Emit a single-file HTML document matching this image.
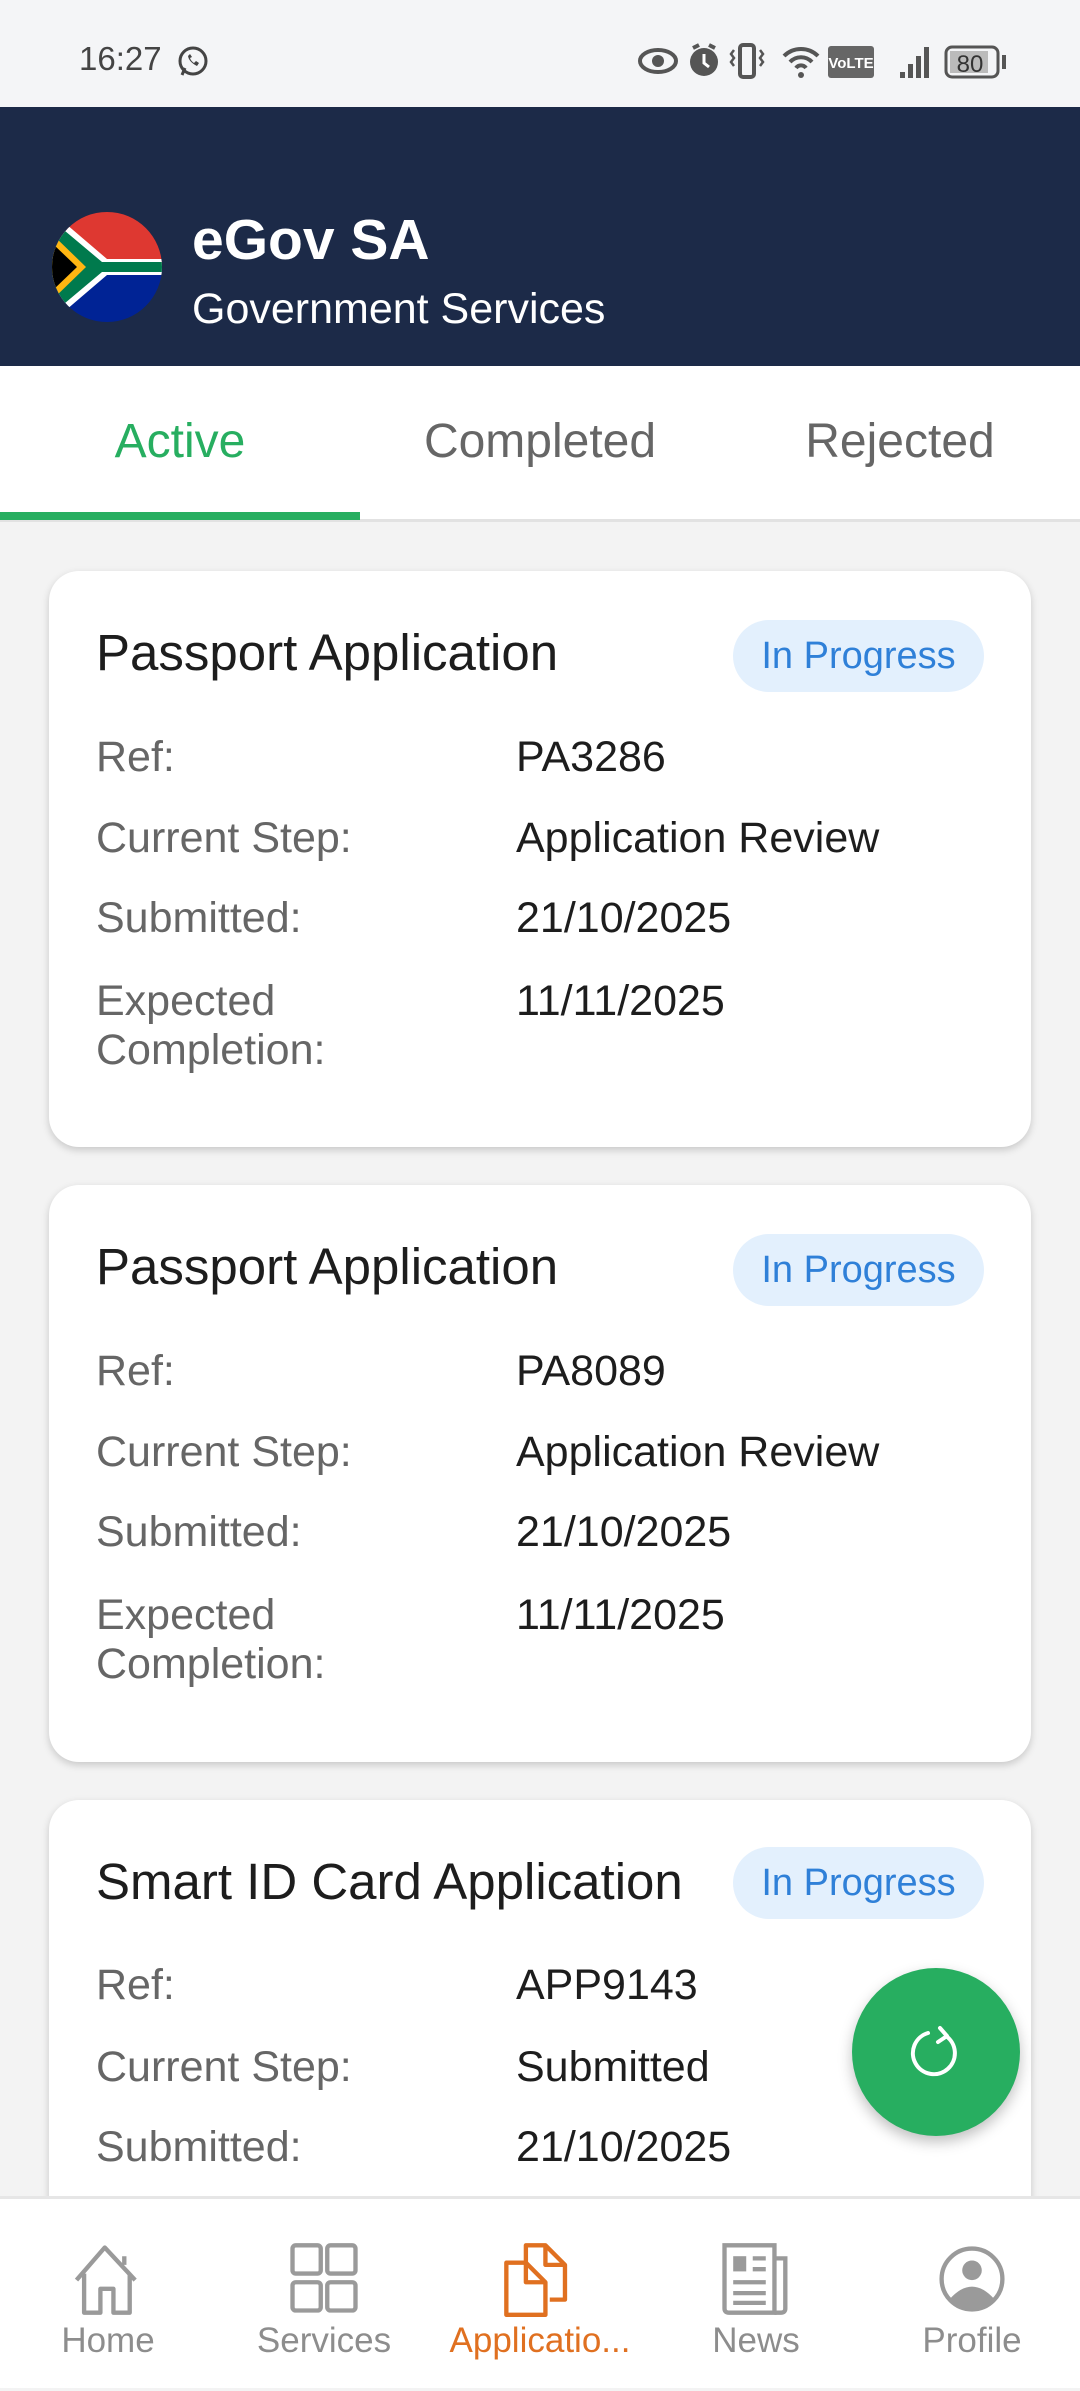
<!DOCTYPE html>
<html><head><meta charset="utf-8"><style>
*{margin:0;padding:0;box-sizing:border-box}
body{width:1080px;height:2388px;position:relative;overflow:hidden;background:#f3f3f3;font-family:"Liberation Sans",sans-serif}
.abs{position:absolute}
#status{left:0;top:0;width:1080px;height:107px;background:#f4f5f7}
#hdr{left:0;top:107px;width:1080px;height:259px;background:#1c2a48}
#tabs{left:0;top:366px;width:1080px;height:156px;background:#fff;border-bottom:3px solid #e2e2e2}
.tab{top:0;height:156px;line-height:152px;font-size:48px;text-align:center;color:#666;width:360px}
.card{left:49px;width:982px;background:#fff;border-radius:30px;box-shadow:0 3px 8px rgba(0,0,0,.18)}
.title{left:47px;font-size:51px;color:#1d1d1d;line-height:60px}
.badge{left:684px;width:251px;height:72px;border-radius:36px;background:#e3f0fd;color:#2f80d8;font-size:38px;line-height:72px;text-align:center}
.lbl{left:47px;font-size:43px;color:#666;line-height:49px}
.val{left:467px;font-size:43px;color:#1d1d1d;line-height:49px}
#nav{left:0;top:2196px;width:1080px;height:192px;background:#fff;border-top:3px solid #e6e6e6;z-index:5}
.ni{top:0;width:216px;height:192px;text-align:center}
.ni svg{position:absolute;left:70px;top:42px}
.ni span{position:absolute;left:0;width:216px;top:122px;font-size:35px;color:#8d8d8d}
</style></head><body>
<div id="status" class="abs">
  <div class="abs" style="left:79px;top:40px;font-size:33px;color:#444">16:27</div>
  <svg class="abs" style="left:176px;top:44px" width="34" height="34" viewBox="0 0 34 34"><circle cx="17" cy="17" r="13" fill="none" stroke="#444" stroke-width="3"/><path d="M6 31 L9 24" stroke="#444" stroke-width="3"/><path d="M12 12 q1 6 9 10 l2-3-3-2-2 2q-3-2-4-5l2-1-2-3z" fill="#444"/></svg>
  <svg class="abs" style="left:636px;top:42px" width="380" height="38" viewBox="0 0 380 38">
    <ellipse cx="22" cy="19" rx="18" ry="11" fill="none" stroke="#555" stroke-width="4"/><circle cx="22" cy="19" r="6" fill="#555"/>
    <circle cx="68" cy="20" r="14" fill="#555"/><path d="M57 6l6-3M79 6l-6-3" stroke="#555" stroke-width="4"/><path d="M68 12v9l5 4" stroke="#fff" stroke-width="3" fill="none"/>
    <rect x="104" y="3" width="14" height="32" rx="3" fill="none" stroke="#555" stroke-width="4"/><path d="M98 8l-3 4 3 4-3 4 3 4M124 8l3 4-3 4 3 4-3 4" stroke="#555" stroke-width="2.5" fill="none"/>
    <path d="M148 14a24 24 0 0 1 34 0M154 20a15 15 0 0 1 22 0M160 26a6 6 0 0 1 10 0" stroke="#555" stroke-width="4" fill="none"/><circle cx="165" cy="33" r="3" fill="#555"/>
    <rect x="192" y="4" width="46" height="32" rx="3" fill="#666"/><text x="215" y="26" font-size="15" font-weight="bold" fill="#fff" text-anchor="middle">VoLTE</text>
    <rect x="264" y="30" width="5" height="6" fill="#555"/><rect x="272" y="22" width="5" height="14" fill="#555"/><rect x="280" y="14" width="5" height="22" fill="#555"/><rect x="288" y="5" width="5" height="31" fill="#555"/>
    <rect x="310" y="5" width="52" height="30" rx="6" fill="none" stroke="#555" stroke-width="3"/><rect x="314" y="9" width="38" height="22" fill="#bbb"/><rect x="366" y="13" width="4" height="14" fill="#555"/><text x="334" y="30" font-size="24" fill="#333" text-anchor="middle">80</text>
  </svg>
</div>
<div id="hdr" class="abs">
  <svg class="abs" style="left:52px;top:105px" width="110" height="110" viewBox="0 0 110 110">
    <defs><clipPath id="c"><circle cx="55" cy="55" r="55"/></clipPath></defs>
    <g clip-path="url(#c)">
      <rect width="110" height="55" fill="#de3831"/><rect y="55" width="110" height="55" fill="#002395"/>
      <path d="M0 0 L55 47 H110 V63 H55 L0 110Z" fill="#fff"/>
      <path d="M0 8 L50 50 H110 V60 H50 L0 102Z" fill="#007a4d"/>
      <path d="M0 22 L34 55 L0 88Z" fill="#ffb612"/>
      <path d="M0 31 L25 55 L0 79Z" fill="#000"/>
    </g>
  </svg>
  <div class="abs" style="left:192px;top:100px;font-size:57px;font-weight:bold;color:#fff">eGov SA</div>
  <div class="abs" style="left:192px;top:178px;font-size:43px;color:#fff">Government Services</div>
</div>
<div id="tabs" class="abs">
  <div class="abs tab" style="left:0;color:#27ae60;font-weight:500">Active</div>
  <div class="abs tab" style="left:360px">Completed</div>
  <div class="abs tab" style="left:720px">Rejected</div>
  <div class="abs" style="left:0;top:146px;width:360px;height:8px;background:#27ae60"></div>
</div>

<div class="abs card" style="top:571px;height:576px">
  <div class="abs title" style="top:52px">Passport Application</div>
  <div class="abs badge" style="top:49px">In Progress</div>
  <div class="abs lbl" style="top:162px">Ref:</div><div class="abs val" style="top:162px">PA3286</div>
  <div class="abs lbl" style="top:243px">Current Step:</div><div class="abs val" style="top:243px">Application Review</div>
  <div class="abs lbl" style="top:323px">Submitted:</div><div class="abs val" style="top:323px">21/10/2025</div>
  <div class="abs lbl" style="top:406px">Expected<br>Completion:</div><div class="abs val" style="top:406px">11/11/2025</div>
</div>
<div class="abs card" style="top:1185px;height:577px">
  <div class="abs title" style="top:52px">Passport Application</div>
  <div class="abs badge" style="top:49px">In Progress</div>
  <div class="abs lbl" style="top:162px">Ref:</div><div class="abs val" style="top:162px">PA8089</div>
  <div class="abs lbl" style="top:243px">Current Step:</div><div class="abs val" style="top:243px">Application Review</div>
  <div class="abs lbl" style="top:323px">Submitted:</div><div class="abs val" style="top:323px">21/10/2025</div>
  <div class="abs lbl" style="top:406px">Expected<br>Completion:</div><div class="abs val" style="top:406px">11/11/2025</div>
</div>
<div class="abs card" style="top:1800px;height:420px;border-radius:30px 30px 0 0">
  <div class="abs title" style="top:52px">Smart ID Card Application</div>
  <div class="abs badge" style="top:47px">In Progress</div>
  <div class="abs lbl" style="top:161px">Ref:</div><div class="abs val" style="top:161px">APP9143</div>
  <div class="abs lbl" style="top:243px">Current Step:</div><div class="abs val" style="top:243px">Submitted</div>
  <div class="abs lbl" style="top:323px">Submitted:</div><div class="abs val" style="top:323px">21/10/2025</div>
</div>

<div class="abs" style="left:852px;top:1968px;width:168px;height:168px;border-radius:50%;background:#27ae60;box-shadow:0 6px 14px rgba(0,0,0,.25);z-index:6">
  <svg class="abs" style="left:54px;top:54px" width="60" height="60" viewBox="0 0 60 60"><path d="M40 14 A21 21 0 1 1 22 11" fill="none" stroke="#fff" stroke-width="4" stroke-linecap="round"/><path d="M34 6 L41 14 L32 20" fill="none" stroke="#fff" stroke-width="4" stroke-linecap="round" stroke-linejoin="round"/></svg>
</div>

<div id="nav" class="abs">
  <div class="abs ni" style="left:0"><svg width="76" height="76" viewBox="0 0 70 70"><path d="M6 36 L32 6 L60 36 M13 30 V66 H28 V44 H40 V66 H55 V30 M50 14 V22" fill="none" stroke="#9a9a9a" stroke-width="4" stroke-linejoin="round"/></svg><span>Home</span></div>
  <div class="abs ni" style="left:216px"><svg width="76" height="76" viewBox="0 0 70 70"><g fill="none" stroke="#9a9a9a" stroke-width="4"><rect x="6" y="4" width="26" height="26" rx="3"/><rect x="38" y="4" width="26" height="26" rx="3"/><rect x="6" y="38" width="26" height="26" rx="3"/><rect x="38" y="38" width="26" height="26" rx="3"/></g></svg><span>Services</span></div>
  <div class="abs ni" style="left:432px"><svg width="76" height="76" viewBox="0 0 70 70"><g fill="none" stroke="#e07020" stroke-width="4" stroke-linejoin="round"><path d="M22 22 V4 H40 L58 22 V54 H44"/><path d="M40 4 V22 H58"/><path d="M4 20 H22 L40 38 V68 H4Z"/><path d="M22 20 V38 H40"/></g></svg><span style="color:#e07020">Applicatio...</span></div>
  <div class="abs ni" style="left:648px"><svg width="76" height="76" viewBox="0 0 70 70"><g fill="none" stroke="#9a9a9a" stroke-width="4"><path d="M6 4 H52 V66 H10 Q6 66 6 62Z"/><path d="M52 16 H62 V62 Q62 66 58 66 H52"/><path d="M14 38 H44 M14 48 H44 M14 57 H44 M32 16 H44 M32 26 H44"/></g><rect x="14" y="14" width="12" height="14" fill="#9a9a9a"/></svg><span>News</span></div>
  <div class="abs ni" style="left:864px"><svg width="76" height="76" viewBox="0 0 70 70"><circle cx="35" cy="35" r="28" fill="none" stroke="#9a9a9a" stroke-width="4"/><circle cx="35" cy="27" r="9" fill="#9a9a9a"/><path d="M14 54 Q35 30 56 54 Q35 70 14 54Z" fill="#9a9a9a"/></svg><span>Profile</span></div>
</div>
</body></html>
